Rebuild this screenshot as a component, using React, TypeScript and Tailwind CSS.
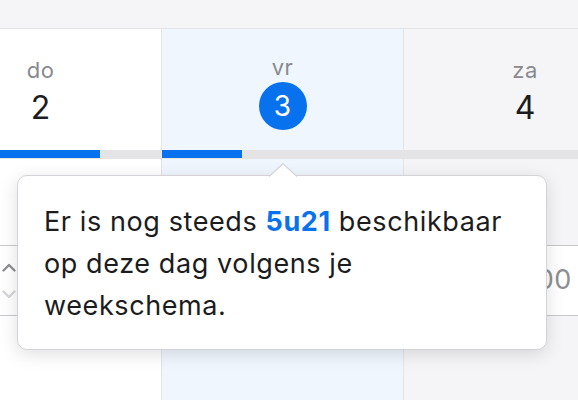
import React from "react";

function Cells({ children }: { children: [React.ReactNode, React.ReactNode, React.ReactNode] }) {
  return <div className="flex ml-[-80px]">{children}</div>;
}

export default function App() {
  return (
    <div className="relative w-[578px] h-[400px] overflow-hidden bg-white font-['Inter',sans-serif]">
      {/* top band */}
      <div className="h-[29px] bg-[#f5f5f7] border-b border-[#e4e4e7]" />

      {/* header row */}
      <Cells>
        <div className="w-[242px] h-[121px] shrink-0 bg-white border-r border-[#e4e4e7] flex flex-col items-center pt-[29px]">
          <div className="text-[22px] leading-[24px] tracking-[0.5px] text-[#8a8a8e]">do</div>
          <div className="mt-[10px] text-[32px] leading-[32px] text-[#1c1c1e]">2</div>
        </div>
        <div className="w-[242px] h-[121px] shrink-0 bg-[#eff6fe] border-r border-[#e4e4e7] flex flex-col items-center pt-[26px]">
          <div className="text-[22px] leading-[24px] tracking-[0.5px] text-[#8a8a8e]">vr</div>
          <div className="mt-[3px] w-[48px] h-[48px] rounded-full bg-[#0872ee] flex items-center justify-center text-white text-[28px] leading-none">
            3
          </div>
        </div>
        <div className="w-[242px] h-[121px] shrink-0 bg-[#f5f5f7] flex flex-col items-center pt-[29px]">
          <div className="text-[22px] leading-[24px] tracking-[0.5px] text-[#8a8a8e]">za</div>
          <div className="mt-[10px] text-[32px] leading-[32px] text-[#1c1c1e]">4</div>
        </div>
      </Cells>

      {/* progress bars */}
      <Cells>
        <div className="w-[242px] h-[9px] shrink-0 bg-[#e4e4e6] border-r border-[#e4e4e7]">
          <div className="h-[8px] w-[180px] bg-[#0872ee]" />
        </div>
        <div className="w-[242px] h-[9px] shrink-0 bg-[#e4e4e6] border-r border-[#e4e4e7]">
          <div className="h-[8px] w-[80px] bg-[#0872ee]" />
        </div>
        <div className="w-[242px] h-[9px] shrink-0 bg-[#e4e4e6]" />
      </Cells>

      {/* spacer */}
      <Cells>
        <div className="w-[242px] h-[86px] shrink-0 bg-white border-r border-[#e4e4e7]" />
        <div className="w-[242px] h-[86px] shrink-0 bg-[#eff6fe] border-r border-[#e4e4e7]" />
        <div className="w-[242px] h-[86px] shrink-0 bg-[#f5f5f7]" />
      </Cells>

      {/* input row */}
      <div className="h-[71px] bg-white border-y border-[#c9c9cd] flex items-center justify-between pl-[2px] pr-[6px]">
        <div className="flex flex-col gap-[18px] mt-[1px]">
          <svg width="14" height="9" viewBox="0 0 14 9" fill="none">
            <path d="M1.5 7.5L7 2L12.5 7.5" stroke="#8e8e93" strokeWidth="2.4" strokeLinecap="round" strokeLinejoin="round" />
          </svg>
          <svg width="14" height="9" viewBox="0 0 14 9" fill="none">
            <path d="M1.5 1.5L7 7L12.5 1.5" stroke="#d6d6da" strokeWidth="2.4" strokeLinecap="round" strokeLinejoin="round" />
          </svg>
        </div>
        <div className="text-[27px] tracking-[0.6px] text-[#8e8e93]">0:00</div>
      </div>

      {/* rest */}
      <Cells>
        <div className="w-[242px] h-[100px] shrink-0 bg-white border-r border-[#e4e4e7]" />
        <div className="w-[242px] h-[100px] shrink-0 bg-[#eff6fe] border-r border-[#e4e4e7]" />
        <div className="w-[242px] h-[100px] shrink-0 bg-[#f5f5f7]" />
      </Cells>

      {/* tooltip */}
      <div className="absolute left-[17px] top-[175px] w-[530px] h-[175px] rounded-[10px] border border-[#d4d4d8] bg-white shadow-[0_4px_18px_rgba(0,0,0,0.13)] pl-[26px] pr-[20px] pt-[25px]">
        <svg className="absolute left-[251px] top-[-13px]" width="28" height="14" viewBox="0 0 28 14" fill="none">
          <path d="M0 13.5 L14 0.7 L28 13.5" fill="white" stroke="#d4d4d8" strokeWidth="1.2" />
          <rect x="1" y="13" width="26" height="2" fill="white" />
        </svg>
        <p className="text-[27px] leading-[42px] tracking-[0.6px] text-[#1c1c1e]">
          Er is nog steeds <span className="font-bold text-[#0872ee]">5u21</span> beschikbaar op deze dag volgens je weekschema.
        </p>
      </div>
    </div>
  );
}
